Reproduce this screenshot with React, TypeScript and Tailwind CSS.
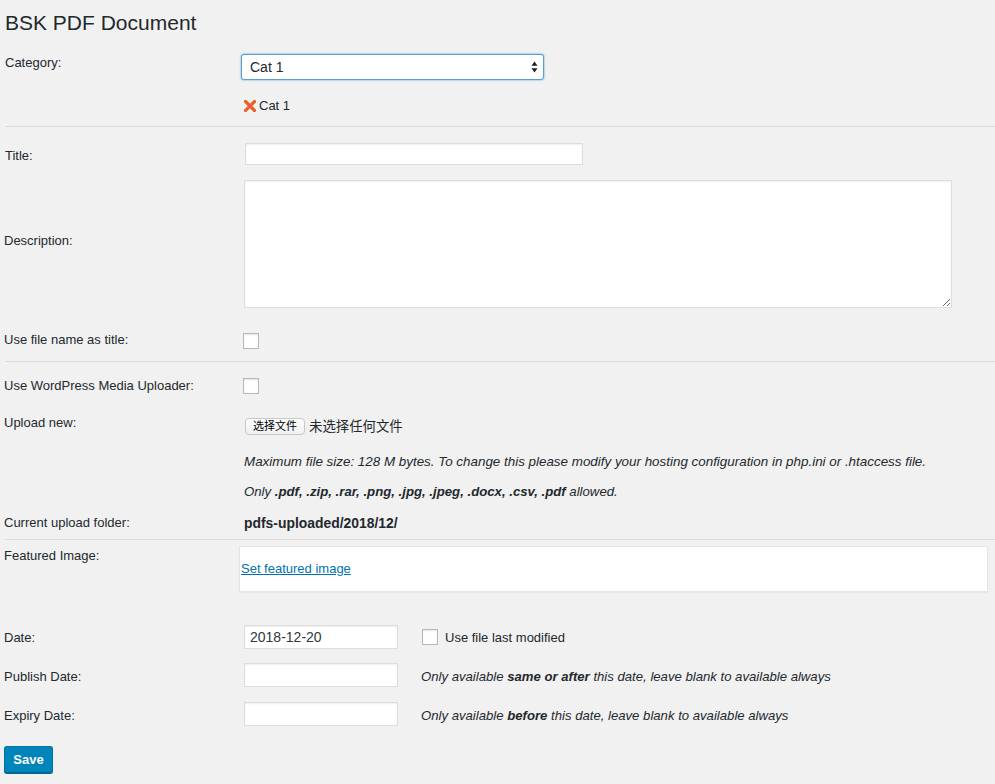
import React from 'react';

const font = { fontFamily: '"Liberation Sans", Arial, "Noto Sans CJK SC", sans-serif' };

const Divider = () => <div className="ml-px h-px bg-[#dcdcdc]" />;

const Checkbox = () => (
  <span className="block h-4 w-4 shrink-0 border border-[#b4b9be] bg-white shadow-[inset_0_1px_2px_rgba(0,0,0,0.1)]" />
);

const TextInput = ({ className = '', value = '' }: { className?: string; value?: string }) => (
  <input
    readOnly
    value={value}
    className={`border border-[#ddd] bg-white px-[5px] text-[14px] text-[#32373c] shadow-[inset_0_1px_2px_rgba(0,0,0,0.07)] outline-none ${className}`}
  />
);

export default function App() {
  return (
    <div className="min-h-[784px] bg-[#f1f1f1] pl-1 text-[13px] leading-4 text-[#23282d]" style={font}>
      <h1 className="ml-px pt-2 text-[21px] leading-[30px] font-normal">BSK PDF Document</h1>

      {/* Category */}
      <div className="mt-4 flex items-start">
        <div className="w-[240px] pt-px pl-px">Category:</div>
        <div className="-ml-[3px]">
          <div className="relative h-[26px] w-[303px] rounded-[3px] border border-[#5b9dd9] bg-white shadow-[0_0_2px_rgba(30,140,190,0.8)]">
            <span className="absolute left-[8px] top-[4px] text-[14px] leading-4">Cat 1</span>
            <svg className="absolute right-[5px] top-[6px]" width="7" height="12" viewBox="0 0 7 12">
              <path d="M3.5 0.5 L6.5 4.8 L0.5 4.8 Z" fill="#222" />
              <path d="M3.5 11.5 L6.5 7.2 L0.5 7.2 Z" fill="#222" />
            </svg>
          </div>
          <div className="mt-[18px] ml-[3px] flex items-center gap-[3px]">
            <svg width="12" height="12" viewBox="0 0 12 12">
              <path d="M1.5 1.5 L10.5 10.5 M10.5 1.5 L1.5 10.5" stroke="#e9602a" strokeWidth="3.2" strokeLinecap="square" />
            </svg>
            <span>Cat 1</span>
          </div>
        </div>
      </div>

      <div className="mt-3">
        <Divider />
      </div>

      {/* Title */}
      <div className="mt-4 flex items-center">
        <div className="w-[240px] pt-[3px] pl-px">Title:</div>
        <TextInput className="ml-px h-[22px] w-[338px]" />
      </div>

      {/* Description */}
      <div className="mt-[15px] flex items-center">
        <div className="-mt-[6px] w-[240px]">Description:</div>
        <textarea
          readOnly
          className="h-[128px] w-[708px] resize border border-[#ddd] bg-white shadow-[inset_0_1px_2px_rgba(0,0,0,0.07)] outline-none"
        />
      </div>

      {/* Use file name */}
      <div className="mt-[25px] flex items-center">
        <div className="-mt-[2px] w-[239px]">Use file name as title:</div>
        <Checkbox />
      </div>

      <div className="mt-3">
        <Divider />
      </div>

      <div className="mt-4 flex items-center">
        <div className="w-[239px]">Use WordPress Media Uploader:</div>
        <Checkbox />
      </div>

      {/* Upload new */}
      <div className="mt-5 flex items-start">
        <div className="w-[241px] pt-px">Upload new:</div>
        <div className="mt-1 flex items-center">
          <button className="h-[17px] rounded-[4px] border border-[#c8c8c8] bg-gradient-to-b from-white to-[#f0f0f0] px-[7px] text-[11px] leading-[15px] text-black">
            选择文件
          </button>
          <span className="ml-[4px] text-[13.4px] leading-4 text-[#23282d]" style={{ fontFamily: '"Liberation Sans", "Noto Sans CJK SC", sans-serif' }}>
            未选择任何文件
          </span>
        </div>
      </div>

      <div className="mt-[19px] pl-[240px] text-[13.4px] italic">
        Maximum file size: 128 M bytes. To change this please modify your hosting configuration in php.ini or .htaccess file.
      </div>
      <div className="mt-[14px] pl-[240px] text-[13.2px] italic">
        Only <b className="text-[13.2px]">.pdf, .zip, .rar, .png, .jpg, .jpeg, .docx, .csv, .pdf</b> allowed.
      </div>

      <div className="mt-[15px] flex">
        <div className="w-[240px]">Current upload folder:</div>
        <b className="text-[13.9px]">pdfs-uploaded/2018/12/</b>
      </div>

      <div className="mt-[8px]">
        <Divider />
      </div>

      {/* Featured image */}
      <div className="mt-[6px] flex items-start">
        <div className="w-[235px] pt-[2px]">Featured Image:</div>
        <div className="flex h-[46px] w-[749px] items-center border border-[#e5e5e5] bg-white shadow-[0_1px_1px_rgba(0,0,0,0.04)]">
          <a href="#" className="ml-px text-[#0073aa] underline">
            Set featured image
          </a>
        </div>
      </div>

      {/* Dates */}
      <div className="mt-[33px] flex items-center">
        <div className="w-[240px] pt-[2px]">Date:</div>
        <TextInput className="h-6 w-[154px]" value="2018-12-20" />
        <div className="ml-[24px]">
          <Checkbox />
        </div>
        <span className="ml-[7px] pt-[2px]">Use file last modified</span>
      </div>

      <div className="mt-[14px] flex items-center">
        <div className="w-[240px] pt-[3px]">Publish Date:</div>
        <TextInput className="h-6 w-[154px]" />
        <span className="ml-[23px] pt-[3px] text-[13.15px] italic">
          Only available <b>same or after</b> this date, leave blank to available always
        </span>
      </div>

      <div className="mt-[15px] flex items-center">
        <div className="w-[240px] pt-[3px]">Expiry Date:</div>
        <TextInput className="h-6 w-[154px]" />
        <span className="ml-[23px] pt-[3px] text-[13.15px] italic">
          Only available <b>before</b> this date, leave blank to available always
        </span>
      </div>

      <div className="mt-5 pb-4">
        <button className="h-[27px] w-[49px] rounded-[3px] border border-[#0073aa] border-b-[#006799] bg-[#0085ba] text-[13px] font-bold text-white shadow-[0_1px_0_#006799]">
          Save
        </button>
      </div>
    </div>
  );
}
